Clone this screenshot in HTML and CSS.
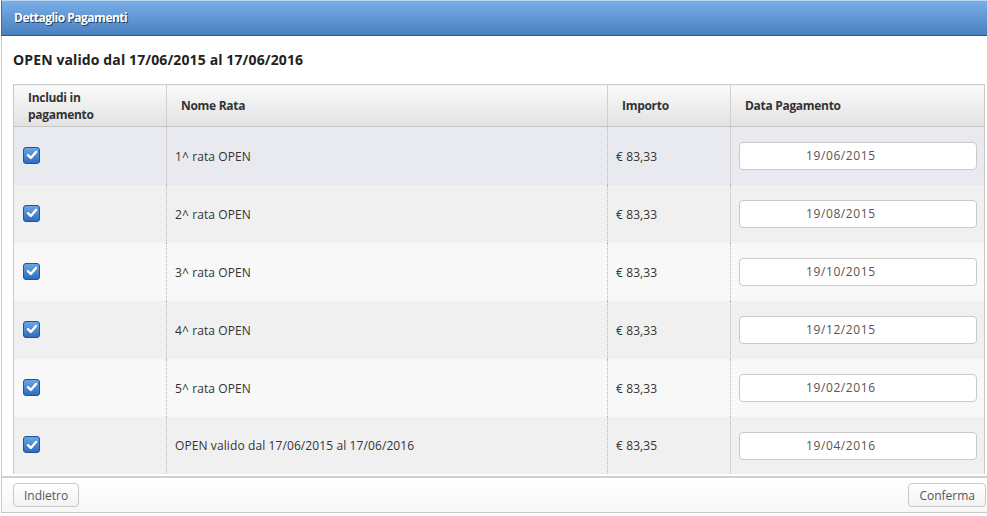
FILE: index.html
```html
<!DOCTYPE html>
<html lang="it">
<head>
<meta charset="utf-8">
<title>Dettaglio Pagamenti</title>
<link rel="stylesheet" href="styles.css">
</head>
<body>
<div class="dialog">
  <div class="titlebar">Dettaglio Pagamenti</div>
  <div class="content">
    <h2 class="heading">OPEN valido dal 17/06/2015 al 17/06/2016</h2>
    <table class="grid">
      <colgroup>
        <col class="c1"><col class="c2"><col class="c3"><col class="c4">
      </colgroup>
      <thead>
        <tr>
          <th>Includi in<br>pagamento</th>
          <th>Nome Rata</th>
          <th>Importo</th>
          <th>Data Pagamento</th>
        </tr>
      </thead>
      <tbody>
        <tr class="r1">
          <td><span class="chk"><svg viewBox="0 0 16 16" width="16" height="16"><path d="M4 8.2 L6.8 11 L12 5" fill="none" stroke="#fff" stroke-width="2.4" stroke-linecap="round" stroke-linejoin="round"/></svg></span></td>
          <td>1^ rata OPEN</td>
          <td>€ 83,33</td>
          <td><div class="date">19/06/2015</div></td>
        </tr>
        <tr class="r2">
          <td><span class="chk"><svg viewBox="0 0 16 16" width="16" height="16"><path d="M4 8.2 L6.8 11 L12 5" fill="none" stroke="#fff" stroke-width="2.4" stroke-linecap="round" stroke-linejoin="round"/></svg></span></td>
          <td>2^ rata OPEN</td>
          <td>€ 83,33</td>
          <td><div class="date">19/08/2015</div></td>
        </tr>
        <tr class="r3">
          <td><span class="chk"><svg viewBox="0 0 16 16" width="16" height="16"><path d="M4 8.2 L6.8 11 L12 5" fill="none" stroke="#fff" stroke-width="2.4" stroke-linecap="round" stroke-linejoin="round"/></svg></span></td>
          <td>3^ rata OPEN</td>
          <td>€ 83,33</td>
          <td><div class="date">19/10/2015</div></td>
        </tr>
        <tr class="r2">
          <td><span class="chk"><svg viewBox="0 0 16 16" width="16" height="16"><path d="M4 8.2 L6.8 11 L12 5" fill="none" stroke="#fff" stroke-width="2.4" stroke-linecap="round" stroke-linejoin="round"/></svg></span></td>
          <td>4^ rata OPEN</td>
          <td>€ 83,33</td>
          <td><div class="date">19/12/2015</div></td>
        </tr>
        <tr class="r3">
          <td><span class="chk"><svg viewBox="0 0 16 16" width="16" height="16"><path d="M4 8.2 L6.8 11 L12 5" fill="none" stroke="#fff" stroke-width="2.4" stroke-linecap="round" stroke-linejoin="round"/></svg></span></td>
          <td>5^ rata OPEN</td>
          <td>€ 83,33</td>
          <td><div class="date">19/02/2016</div></td>
        </tr>
        <tr class="r2">
          <td><span class="chk"><svg viewBox="0 0 16 16" width="16" height="16"><path d="M4 8.2 L6.8 11 L12 5" fill="none" stroke="#fff" stroke-width="2.4" stroke-linecap="round" stroke-linejoin="round"/></svg></span></td>
          <td>OPEN valido dal 17/06/2015 al 17/06/2016</td>
          <td>€ 83,35</td>
          <td><div class="date">19/04/2016</div></td>
        </tr>
      </tbody>
    </table>
  </div>
  <div class="footer">
    <button class="btn">Indietro</button>
    <button class="btn">Conferma</button>
  </div>
</div>
</body>
</html>
```
FILE: styles.css
```css
html, body {
  margin: 0;
  padding: 0;
  background: #ffffff;
}
body {
  font-family: "Open Sans", "Noto Sans", sans-serif;
  font-size: 12px;
  color: #333;
  overflow: hidden;
}
.dialog {
  margin-left: 1px;
  width: 990px;
  height: 513px;
  border-left: 1px solid #c8c8c8;
  border-bottom: 1px solid #c8c8c8;
  box-sizing: border-box;
  display: flex;
  flex-direction: column;
  background: #fff;
}
.titlebar {
  height: 36px;
  box-sizing: border-box;
  border-top: 1px solid #bcd6f2;
  border-bottom: 1px solid #2e5a8c;
  border-left: 1px solid #3f6ea5;
  margin-left: -1px;
  background: linear-gradient(#78afe8, #4a80bf);
  color: #fff;
  font-weight: bold;
  font-size: 12px;
  line-height: 33px;
  padding-left: 12px;
  text-shadow: 1px 1px 0 #1d3f66;
  letter-spacing: -0.5px;
}
.content {
  padding: 0 0 0 11px;
  flex: 1;
}
.heading {
  margin: 0;
  font-size: 14px;
  font-weight: bold;
  color: #222;
  height: 48px;
  line-height: 48px;
  letter-spacing: 0.12px;
}
.grid {
  width: 972px;
  border-collapse: collapse;
  table-layout: fixed;
  border-left: 1px solid #c8c8c8;
  border-right: 1px solid #c8c8c8;
}
.c1 { width: 153px; }
.c2 { width: 441px; }
.c3 { width: 123px; }
.c4 { width: auto; }
.grid th {
  height: 41px;
  text-align: left;
  font-weight: bold;
  color: #333;
  padding: 0 0 0 14px;
  line-height: 17px;
  background: linear-gradient(#fafafa, #e2e2e2);
  border-top: 1px solid #cfcfcf;
  border-bottom: 1px solid #c6c6c6;
  border-left: 1px solid #d0d0d0;
  letter-spacing: -0.3px;
}
.grid th:first-child { border-left: none; }
.grid td {
  height: 58px;
  padding: 0 0 0 8px;
  border-left: 1px dotted #b8b8b8;
  vertical-align: middle;
  color: #333;
  letter-spacing: 0.1px;
}
.grid td:first-child {
  border-left: none;
  padding-left: 9px;
}
.grid tbody tr:last-child td {
  height: 57px;
}
.r1 { background: #e9eaef; }
.r2 { background: #f0f0f0; }
.r3 { background: #f8f8f8; }
.chk {
  display: block;
  width: 17px;
  height: 17px;
  box-sizing: border-box;
  border-radius: 3px;
  background: linear-gradient(#6aa6e6, #2f6cbf);
  border: 1px solid #1f5595;
  position: relative;
  top: -1px;
}
.chk svg {
  display: block;
  margin: -0.5px;
}
.date {
  width: 238px;
  height: 28px;
  box-sizing: border-box;
  border: 1px solid #c9c9c9;
  border-radius: 4px;
  background: #fff;
  color: #555;
  line-height: 26px;
  padding-left: 66px;
  font-size: 12px;
  letter-spacing: 0.6px;
}
.footer {
  border-top: 2px solid #cfcfcf;
  height: 36px;
  box-sizing: border-box;
  display: flex;
  justify-content: space-between;
  align-items: center;
  padding: 0 2px 0 11px;
  background: linear-gradient(#fff, #f6f6f6);
  margin-right: 3px;
}
.btn {
  font-family: "Open Sans", "Noto Sans", sans-serif;
  font-size: 12px;
  color: #555;
  height: 24px;
  border: 1px solid #c8c8c8;
  border-radius: 4px;
  background: linear-gradient(#ffffff, #f3f3f3);
  padding: 0 10px;
  letter-spacing: 0;
}
```
